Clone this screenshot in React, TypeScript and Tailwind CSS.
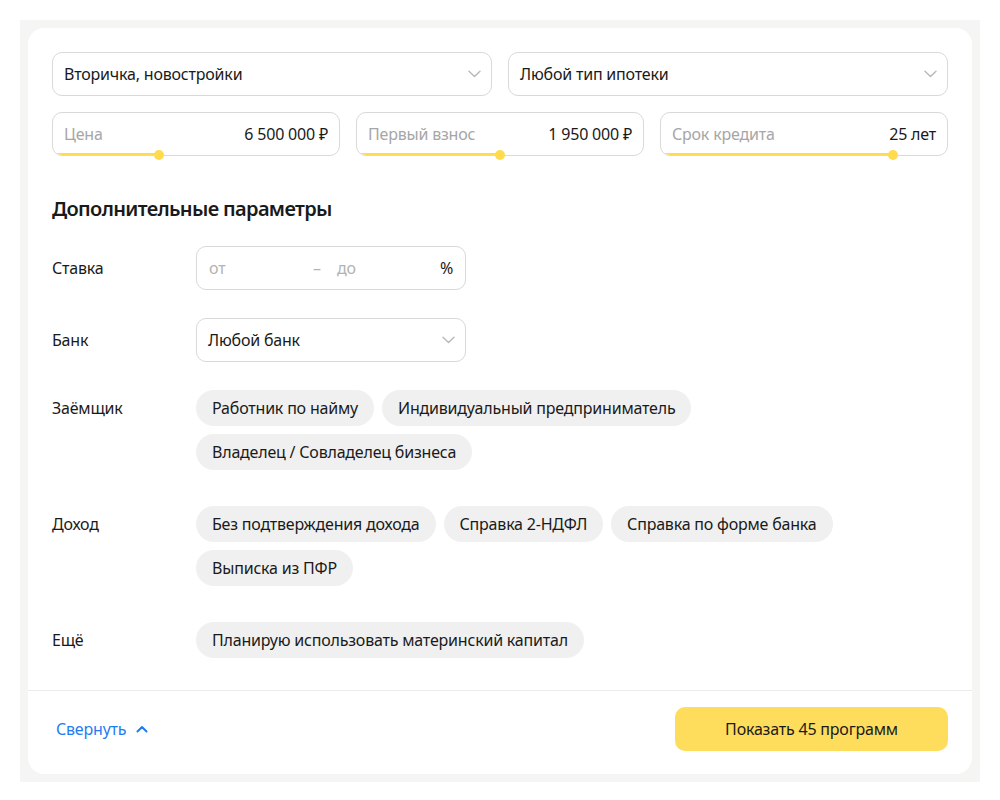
import React from "react";

const font = { fontFamily: '"Noto Sans", "Open Sans", Arial, sans-serif', letterSpacing: "-0.2px" };

function Chevron({ className = "" }: { className?: string }) {
  return (
    <svg width="13" height="8" viewBox="0 0 13 8" className={className} fill="none">
      <path d="M1 1.2l5.5 5.3L12 1.2" stroke="#b8b8b8" strokeWidth="1.4" strokeLinecap="round" strokeLinejoin="round" />
    </svg>
  );
}

function Select({ label, className = "" }: { label: string; className?: string }) {
  return (
    <div className={`flex h-[44px] items-center justify-between rounded-[10px] border border-[#d9d9d9] bg-white pl-[11px] pr-[10px] text-[16px] leading-[20px] text-[#1a1a1a] ${className}`}>
      <span className="pb-[1px]">{label}</span>
      <Chevron />
    </div>
  );
}

function SliderInput({ label, value, pos }: { label: string; value: string; pos: number }) {
  return (
    <div className="relative flex-1">
      <div className="relative flex h-[44px] items-center justify-between overflow-hidden rounded-[10px] border border-[#d9d9d9] bg-white px-[11px] text-[16px] leading-[20px]">
        <span className="pb-[1px] text-[#a6a6a6]">{label}</span>
        <span className="pb-[1px] text-[#1a1a1a]">{value}</span>
        <div className="absolute bottom-0 left-0 h-[2px] bg-[#ffdb4d]" style={{ width: pos }} />
      </div>
      <div
        className="absolute bottom-[-4px] h-[10px] w-[10px] rounded-full bg-[#ffdb4d]"
        style={{ left: pos - 5 }}
      />
    </div>
  );
}

function Chip({ children }: { children: React.ReactNode }) {
  return (
    <div className="mb-[8px] mr-[8px] flex h-[36px] items-center rounded-full bg-[#f0f0f0] px-[16px] pb-[1px] text-[16px] text-[#1a1a1a]">
      {children}
    </div>
  );
}

function Row({ label, children, chips = false }: { label: string; children: React.ReactNode; chips?: boolean }) {
  return (
    <div className={`flex ${chips ? "items-start" : "items-center"} mb-[28px]`}>
      <div className={`w-[144px] shrink-0 pb-[1px] text-[16px] text-[#1a1a1a] ${chips ? "leading-[36px]" : ""}`}>{label}</div>
      {children}
    </div>
  );
}

export default function App() {
  return (
    <div className="min-h-[800px] bg-white p-[20px]" style={font}>
      <div className="bg-[#f5f5f3] p-[8px]">
        <div className="rounded-[16px] bg-white">
          <div className="px-[24px] pt-[24px] pb-[24px]">
            <div className="flex gap-[16px]">
              <Select label="Вторичка, новостройки" className="flex-1" />
              <Select label="Любой тип ипотеки" className="flex-1" />
            </div>
            <div className="mt-[16px] flex gap-[16px]">
              <SliderInput label="Цена" value="6 500 000 ₽" pos={107} />
              <SliderInput label="Первый взнос" value="1 950 000 ₽" pos={144} />
              <SliderInput label="Срок кредита" value="25 лет" pos={233} />
            </div>
            <h2 className="mt-[40px] mb-[22px] pb-[2px] text-[20px] font-semibold leading-[26px] tracking-[-0.65px] text-[#1a1a1a]">
              Дополнительные параметры
            </h2>
            <Row label="Ставка">
              <div className="flex h-[44px] w-[270px] items-center rounded-[10px] border border-[#d9d9d9] px-[12px] pb-[1px] text-[16px]">
                <span className="w-[104px] text-[#b3b3b3]">от</span>
                <span className="w-[24px] text-[#b3b3b3]">–</span>
                <span className="flex-1 text-[#b3b3b3]">до</span>
                <span className="text-[#1a1a1a]">%</span>
              </div>
            </Row>
            <Row label="Банк">
              <Select label="Любой банк" className="w-[270px]" />
            </Row>
            <Row label="Заёмщик" chips>
              <div className="-mb-[8px] flex flex-wrap">
                <Chip>Работник по найму</Chip>
                <Chip>Индивидуальный предприниматель</Chip>
                <Chip>Владелец / Совладелец бизнеса</Chip>
              </div>
            </Row>
            <div className="h-[8px]" />
            <Row label="Доход" chips>
              <div className="-mb-[8px] flex flex-wrap">
                <Chip>Без подтверждения дохода</Chip>
                <Chip>Справка 2-НДФЛ</Chip>
                <Chip>Справка по форме банка</Chip>
                <Chip>Выписка из ПФР</Chip>
              </div>
            </Row>
            <div className="h-[8px]" />
            <div className="flex items-start">
              <div className="w-[144px] shrink-0 pb-[1px] text-[16px] leading-[36px] text-[#1a1a1a]">Ещё</div>
              <div className="flex flex-wrap">
                <Chip>Планирую использовать материнский капитал</Chip>
              </div>
            </div>
          </div>
          <div className="h-px bg-[#ebebeb]" />
          <div className="flex items-center justify-between pl-[28px] pr-[24px] pt-[16px] pb-[23px]">
            <div className="flex items-center gap-[10px] pb-[1px] text-[16px] text-[#1f7cf2]">
              <span>Свернуть</span>
              <svg width="12" height="8" viewBox="0 0 12 8" fill="none">
                <path d="M1.5 6.5L6 2l4.5 4.5" stroke="#1f7cf2" strokeWidth="2" strokeLinecap="round" strokeLinejoin="round" />
              </svg>
            </div>
            <button className="flex h-[44px] w-[273px] items-center justify-center rounded-[10px] bg-[#ffdd5c] pb-[1px] text-[16px] text-[#1a1a1a]">
              Показать 45 программ
            </button>
          </div>
        </div>
      </div>
    </div>
  );
}
